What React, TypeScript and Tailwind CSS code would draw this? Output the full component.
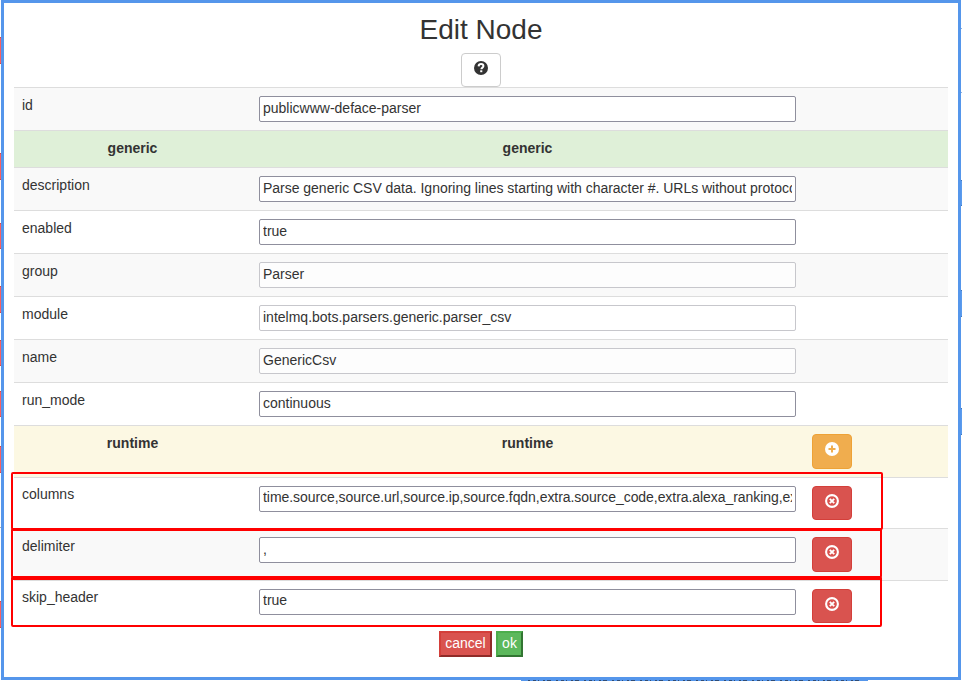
import React from "react";

type Field = {
  label: string;
  value: string;
  height: string;
  striped?: boolean;
  disabled?: boolean;
  removable?: string;
  labelShift?: string;
  inputClass?: string;
};

const idField: Field = { label: "id", value: "publicwww-deface-parser", height: "h-[43px]", striped: true };

const genericFields: Field[] = [
  { label: "description", value: "Parse generic CSV data. Ignoring lines starting with character #. URLs without protocol", height: "h-[43px]", striped: true, inputClass: "pb-[2px] tracking-[-0.02px]" },
  { label: "enabled", value: "true", height: "h-[43px]" },
  { label: "group", value: "Parser", height: "h-[43px]", striped: true, disabled: true },
  { label: "module", value: "intelmq.bots.parsers.generic.parser_csv", height: "h-[43px]", disabled: true },
  { label: "name", value: "GenericCsv", height: "h-[43px]", striped: true, disabled: true },
  { label: "run_mode", value: "continuous", height: "h-[43px]" },
];

const runtimeFields: Field[] = [
  { label: "columns", value: "time.source,source.url,source.ip,source.fqdn,extra.source_code,extra.alexa_ranking,extra", height: "h-[51px]", removable: "h-[34px]", labelShift: "leading-4", inputClass: "pb-1 tracking-[-0.06px]" },
  { label: "delimiter", value: ",", height: "h-[52px]", striped: true, removable: "h-[35px]", labelShift: "leading-[18px]", inputClass: "pb-[2px]" },
  { label: "skip_header", value: "true", height: "h-[51px]", removable: "h-[34px]", labelShift: "leading-4", inputClass: "pb-1" },
];

function Row({ field }: { field: Field }) {
  return (
    <div className={`flex border-t border-[#ddd] pt-2 ${field.height} ${field.striped ? "bg-[#f9f9f9]" : "bg-white"}`}>
      <div className={`w-[245px] shrink-0 pl-2 ${field.labelShift ?? "leading-[18px]"}`}>{field.label}</div>
      <input
        readOnly
        disabled={field.disabled}
        defaultValue={field.value}
        className={`h-[26px] w-[537px] shrink-0 rounded-[2px] border px-[3px] text-[#333] ${field.inputClass ?? "pb-[2px]"} ${
          field.disabled ? "border-[#c7c7cc] bg-white/70" : "border-[#8f8f9d] bg-white"
        }`}
      />
      {field.removable && (
        <button className={`ml-4 flex w-10 justify-center rounded border border-[#d43f3a] bg-[#d9534f] pt-[7px] ${field.removable}`}>
          <svg width="14" height="14" viewBox="0 0 14 14" fill="none" stroke="white">
            <circle cx="7" cy="7" r="5.9" strokeWidth="2.1" />
            <path d="M4.8 4.8 9.2 9.2M9.2 4.8 4.8 9.2" strokeWidth="1.9" />
          </svg>
        </button>
      )}
    </div>
  );
}

const redEdge = "border-y border-[#d84545] bg-[#fa5f5f]";
const blueEdge = "border-y border-[#3f78bd] bg-[#5b9cee]";

export default function App() {
  return (
    <div className="relative flex h-[681px] w-[962px] overflow-hidden bg-white font-['Liberation_Sans',Arial,sans-serif] text-sm text-[#333]">
      <div className="flex w-px flex-col pt-[37px]">
        <i className={`h-[27px] ${redEdge}`} />
        <i className={`mt-[89px] h-[27px] ${redEdge}`} />
        <i className={`mt-[43px] h-[26px] ${redEdge}`} />
        <i className={`mt-[37px] h-[27px] ${redEdge}`} />
        <i className={`mt-[27px] h-[26px] ${redEdge}`} />
        <i className={`mt-[25px] h-[26px] ${redEdge}`} />
        <i className={`mt-[29px] h-[27px] ${redEdge}`} />
        <i className="mt-[54px] h-px bg-[#aaa]" />
        <i className={`mt-[73px] h-[27px] ${redEdge}`} />
      </div>
      <div className="flex w-[960px] flex-col">
        <div className="h-[680px] border-[3px] border-[#5596eb] bg-white px-[10px]">
          <div className="flex h-[84px] flex-col items-center">
            <h1 className="mt-[10px] h-[40px] text-[28px] leading-[34px]">Edit Node</h1>
            <button className="flex h-[34px] w-10 shrink-0 justify-center rounded border border-[#ccc] bg-white pt-[7px]">
              <svg width="14" height="14" viewBox="0 0 14 14">
                <circle cx="7" cy="7" r="7" fill="#333" />
                <path d="M4.6 5.4C4.7 3.7 5.7 3.1 7.1 3.1c1.4 0 2.3.8 2.3 1.9 0 1.7-2 1.6-2 3.3" fill="none" stroke="white" strokeWidth="2" />
                <path d="M6.2 9.3h2.1v1.9H6.2z" fill="white" />
              </svg>
            </button>
          </div>
          <Row field={idField} />
          <div className="flex h-[37px] border-t border-[#ddd] bg-[#dff0d8] pt-2 text-center leading-[18px] font-bold">
            <div className="w-[237px]">generic</div>
            <div className="w-[553px]">generic</div>
          </div>
          {genericFields.map((f) => <Row key={f.label} field={f} />)}
          <div className="flex h-[52px] border-t border-[#ddd] bg-[#fcf8e3] pt-2 text-center leading-[18px] font-bold">
            <div className="w-[237px]">runtime</div>
            <div className="w-[553px]">runtime</div>
            <button className="ml-2 flex h-[35px] w-10 justify-center rounded border border-[#eea236] bg-[#f0ad4e] pt-[7px]">
              <svg width="14" height="14" viewBox="0 0 14 14">
                <circle cx="7" cy="7" r="7" fill="white" />
                <path d="M7 3.5v7M3.5 7h7" stroke="#f0ad4e" strokeWidth="2" />
              </svg>
            </button>
          </div>
          {runtimeFields.map((f) => <Row key={f.label} field={f} />)}
          <div className="flex justify-center gap-1 text-white">
            <button className="flex h-[26px] w-[53px] justify-center border-2 border-t-[#d43f3a] border-r-[#8f2b28] border-b-[#8f2b28] border-l-[#d43f3a] bg-[#d9534f] leading-[20px]">cancel</button>
            <button className="flex h-[26px] w-[27px] justify-center border-2 border-t-[#4cae4c] border-r-[#327532] border-b-[#327532] border-l-[#4cae4c] bg-[#5cb85c] leading-[20px]">ok</button>
          </div>
        </div>
        <svg className="ml-[520px] block" width="347" height="1" viewBox="0 0 347 1">
          <path d="M0 .5h347" stroke="#5596eb" />
          <path d="M7 .5h335" stroke="#2e4d78" strokeDasharray="2 3 3 2 1 4 2 2 4 5" />
        </svg>
      </div>
      <div className="flex w-px flex-col pt-[28px]">
        <i className="h-px bg-[#8fb0dc]" />
        <i className="mt-[63px] h-px bg-[#8fb0dc]" />
        <i className={`mt-[87px] h-[26px] ${blueEdge}`} />
        <i className={`mt-[84px] h-[27px] ${blueEdge}`} />
        <i className={`mt-[91px] h-[27px] ${blueEdge}`} />
      </div>
      <div className="absolute top-[472px] left-[11px] h-[58px] w-[872px] rounded-[2px] border-2 border-[#f00]" />
      <div className="absolute top-[528px] left-[11px] h-[50px] w-[871px] rounded-[2px] border-2 border-t-[3px] border-[#f00]" />
      <div className="absolute top-[576px] left-[11px] h-[51px] w-[871px] rounded-[2px] border-2 border-t-4 border-[#f00]" />
    </div>
  );
}
